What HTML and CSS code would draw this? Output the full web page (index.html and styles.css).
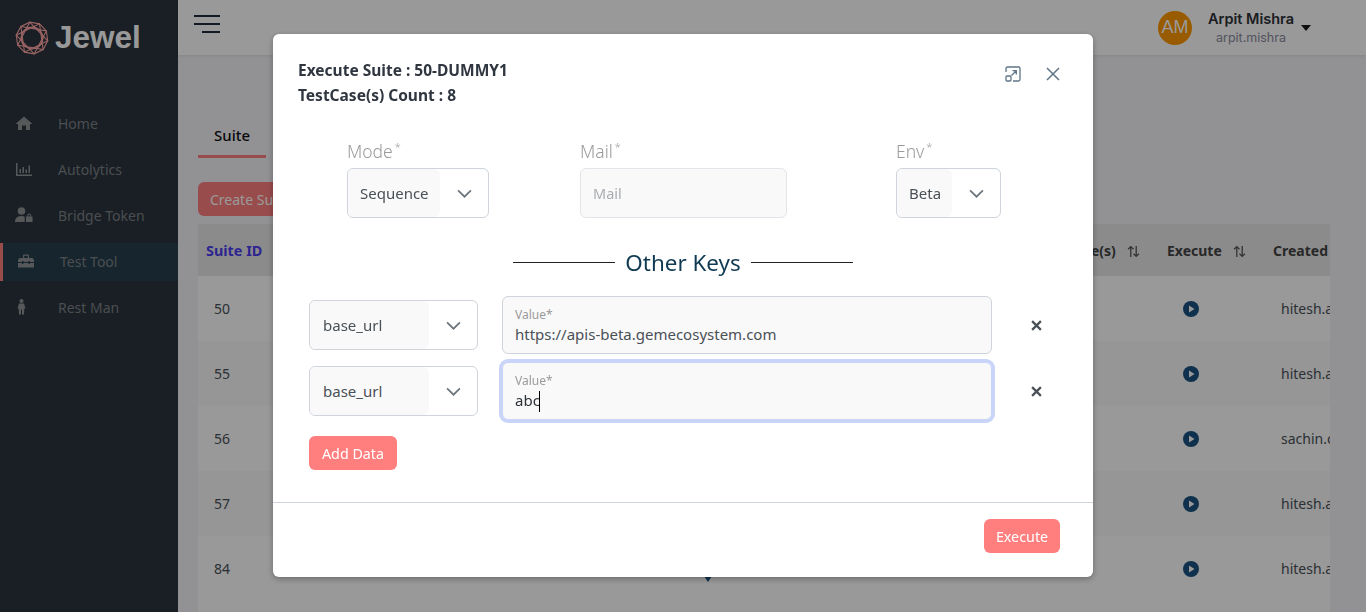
FILE: index.html
```html
<!DOCTYPE html>
<html lang="en">
  <head>
    <meta charset="UTF-8" />
    <meta name="viewport" content="width=device-width, initial-scale=1.0" />
    <title>Jewel - Test Tool</title>
    <link rel="stylesheet" href="styles.css">
  </head>
  <body>
    <div class="shell">
      <aside class="sidebar">
        <div class="logo">
          <svg class="logo-mark" viewBox="0 0 34 34" fill="none" stroke="#ffa5a5" stroke-width="1.1">
            <g transform="rotate(10 17 17)">
              <polygon points="33,17 29.94,26.4 21.94,32.22 12.06,32.22 4.06,26.4 1,17 4.06,7.6 12.06,1.78 21.94,1.78 29.94,7.6" />
              <polygon points="33,17 12.06,32.22 4.06,7.6 29.94,7.6 21.94,32.22 1,17 21.94,1.78 29.94,26.4 4.06,26.4 12.06,1.78" />
              <circle cx="17" cy="17" r="10.8" stroke-width="1.3" />
            </g>
          </svg>
          <span class="logo-text">Jewel</span>
        </div>
        <nav class="nav">
          <a class="nav-item">
            <svg class="nav-icon" viewBox="0 0 16 16"><path d="M8 1.5 16.5 9H14v6h-4v-4.5H6V15H2V9H-.5z" /></svg>
            <span>Home</span>
          </a>
          <a class="nav-item">
            <svg class="nav-icon" viewBox="0 0 16 16"><path d="M0 2h1.5v11.5H16V15H0zM3.5 8H5v4H3.5zM6.5 6H8v6H6.5zM9.5 8.5H11V12H9.5zM12.5 4.5H14V12h-1.5z" /></svg>
            <span>Autolytics</span>
          </a>
          <a class="nav-item">
            <svg class="nav-icon" viewBox="0 0 18 16"><circle cx="6.5" cy="4" r="3.8" /><path d="M0 15c0-4 2.5-6 6.5-6 1.3 0 2.3.2 3.2.6V15zM11 9.5h6.5V15H11zM12.3 9.5V8a2 2 0 0 1 3.9 0v1.500h-1.100V8a.9.9 0 0 0-1.700 0v1.500z" /></svg>
            <span>Bridge Token</span>
          </a>
          <a class="nav-item nav-item-active">
            <svg class="nav-icon" viewBox="0 0 16 16"><path d="M1.5 5h13L16 7v2h-4V8h-1.5v1h-5V8H4v1H0V7zM0 10h4v1h1.500v-1h5v1H12v-1h4v4.500H0zM5 5V2.500q0-1 1-1h4q1 0 1 1V5H9.800V2.800H6.200V5z" /></svg>
            <span>Test Tool</span>
          </a>
          <a class="nav-item">
            <svg class="nav-icon" viewBox="0 0 16 16"><circle cx="5.5" cy="2" r="2" /><path d="M3 4.500h5l1.500 5H8.300L8 15.500H6v-5H5v5H3l-.3-6H1.500z" /></svg>
            <span>Rest Man</span>
          </a>
        </nav>
      </aside>

      <div class="main">
        <header class="topbar">
          <div class="burger"><span></span><span></span><span class="burger-short"></span></div>
          <div class="user">
            <div class="avatar">AM</div>
            <div class="user-text">
              <div class="user-name">Arpit Mishra</div>
              <div class="user-id">arpit.mishra</div>
            </div>
            <div class="user-caret"></div>
          </div>
        </header>

        <section class="content">
          <div class="tabs"><div class="tab">Suite</div></div>
          <button class="create-btn">Create Suite</button>
          <div class="table-wrap">
            <table class="suite-table">
              <colgroup>
                <col class="col-id" /><col class="col-name" /><col class="col-desc" />
                <col class="col-cases" /><col class="col-exec" /><col class="col-by" />
              </colgroup>
              <thead>
                <tr>
                  <th class="th-id">Suite ID</th>
                  <th>Suite Name</th>
                  <th></th>
                  <th>TestCase(s) <svg class="sort" viewBox="0 0 12 12"><path d="M3.5 11V1.5M1 4l2.5-2.5L6 4M8.5 1v9.5M6 8l2.5 2.5L11 8" /></svg></th>
                  <th>Execute <svg class="sort" viewBox="0 0 12 12"><path d="M3.5 11V1.5M1 4l2.5-2.5L6 4M8.5 1v9.5M6 8l2.5 2.5L11 8" /></svg></th>
                  <th>Created By</th>
                </tr>
              </thead>
              <tbody>
                <tr><td>50</td><td></td><td></td><td></td><td class="td-exec"><svg class="play" viewBox="0 0 16 16"><circle cx="8" cy="8" r="8" /><path class="play-tri" d="M6 4.5 11.5 8 6 11.5z" /></svg></td><td>hitesh.agarwal</td></tr>
                <tr><td>55</td><td></td><td></td><td></td><td class="td-exec"><svg class="play" viewBox="0 0 16 16"><circle cx="8" cy="8" r="8" /><path class="play-tri" d="M6 4.5 11.5 8 6 11.5z" /></svg></td><td>hitesh.agarwal</td></tr>
                <tr><td>56</td><td></td><td></td><td></td><td class="td-exec"><svg class="play" viewBox="0 0 16 16"><circle cx="8" cy="8" r="8" /><path class="play-tri" d="M6 4.5 11.5 8 6 11.5z" /></svg></td><td>sachin.chauhan</td></tr>
                <tr><td>57</td><td></td><td></td><td></td><td class="td-exec"><svg class="play" viewBox="0 0 16 16"><circle cx="8" cy="8" r="8" /><path class="play-tri" d="M6 4.5 11.5 8 6 11.5z" /></svg></td><td>hitesh.agarwal</td></tr>
                <tr><td>84</td><td></td><td class="td-marker"><span class="marker"></span></td><td></td><td class="td-exec"><svg class="play" viewBox="0 0 16 16"><circle cx="8" cy="8" r="8" /><path class="play-tri" d="M6 4.5 11.5 8 6 11.5z" /></svg></td><td>hitesh.agarwal</td></tr>
              </tbody>
            </table>
          </div>
        </section>
      </div>
    </div>

    <div class="backdrop">
      <div class="dialog">
        <div class="dialog-head">
          <div class="dialog-title">
            <div>Execute Suite : 50-DUMMY1</div>
            <div>TestCase(s) Count : 8</div>
          </div>
          <div class="dialog-tools">
            <svg class="tool-expand" viewBox="0 0 16 16" fill="none" stroke="#5f7486" stroke-width="1.3">
              <path d="M1 6V2.5A1.5 1.5 0 0 1 2.5 1h11A1.5 1.5 0 0 1 15 2.5v11a1.5 1.5 0 0 1-1.5 1.5H8" />
              <rect x="1" y="10" width="5" height="5" rx="1" />
              <path d="M6.5 9.5 11 5M7.5 4.7H11.3V8.5" />
            </svg>
            <svg class="tool-close" viewBox="0 0 14 14" fill="none" stroke="#5f7486" stroke-width="1.5">
              <path d="M1 1l12 12M13 1 1 13" />
            </svg>
          </div>
        </div>

        <div class="fields">
          <div>
            <div class="field-label">Mode<sup>*</sup></div>
            <div class="select select-mode">
              <div class="select-value">Sequence</div>
              <div class="select-arrow"><svg viewBox="0 0 14 8"><path d="M1 1l6 6 6-6" /></svg></div>
            </div>
          </div>
          <div>
            <div class="field-label">Mail<sup>*</sup></div>
            <div class="mail-input">Mail</div>
          </div>
          <div>
            <div class="field-label">Env<sup>*</sup></div>
            <div class="select select-env">
              <div class="select-value">Beta</div>
              <div class="select-arrow"><svg viewBox="0 0 14 8"><path d="M1 1l6 6 6-6" /></svg></div>
            </div>
          </div>
        </div>

        <div class="divider-title"><span>Other Keys</span></div>

        <div class="key-rows">
          <div class="key-row">
            <div class="select select-key">
              <div class="select-value">base_url</div>
              <div class="select-arrow"><svg viewBox="0 0 14 8"><path d="M1 1l6 6 6-6" /></svg></div>
            </div>
            <div class="value-input">
              <div class="value-label">Value*</div>
              <div class="value-text">https://apis-beta.gemecosystem.com</div>
            </div>
            <svg class="key-remove" viewBox="0 0 10 10"><path d="M1 1l8 8M9 1 1 9" /></svg>
          </div>
          <div class="key-row">
            <div class="select select-key">
              <div class="select-value">base_url</div>
              <div class="select-arrow"><svg viewBox="0 0 14 8"><path d="M1 1l6 6 6-6" /></svg></div>
            </div>
            <div class="value-input value-input-focus">
              <div class="value-label">Value*</div>
              <div class="value-text value-text-dark">abc<span class="text-caret"></span></div>
            </div>
            <svg class="key-remove" viewBox="0 0 10 10"><path d="M1 1l8 8M9 1 1 9" /></svg>
          </div>
        </div>

        <button class="btn btn-add">Add Data</button>

        <div class="dialog-foot">
          <button class="btn btn-execute">Execute</button>
        </div>
      </div>
    </div>
  </body>
</html>
```

FILE: styles.css
```css
* {
  box-sizing: border-box;
}

html,
body {
  height: 100%;
}

body {
  margin: 0;
  overflow: hidden;
  font-family: "Noto Sans", sans-serif;
  font-size: 14px;
  color: #495057;
  background: #f3f3f8;
}

.shell {
  display: flex;
  height: 100vh;
}

/* sidebar */
.sidebar {
  flex: 0 0 178px;
  background: #2a343c;
}

.logo {
  display: flex;
  align-items: center;
  gap: 6px;
  height: 75px;
  padding-left: 15px;
}

.logo-mark {
  width: 34px;
  height: 34px;
}

.logo-text {
  font-family: "Liberation Sans", sans-serif;
  font-size: 31.5px;
  font-weight: 700;
  color: #fff;
}

.nav {
  display: flex;
  flex-direction: column;
  gap: 8px;
  padding-top: 30px;
}

.nav-item {
  display: flex;
  align-items: center;
  height: 38px;
  padding-left: 15px;
  color: #7e8387;
}

.nav-item span {
  margin: 0 0 2px 25px;
}

.nav-icon {
  flex: 0 0 18px;
  width: 18px;
  height: 16px;
  margin-bottom: 2px;
  fill: #8f9396;
}

.nav-item-active {
  border-left: 3px solid #ff7f7f;
  padding-left: 14px;
  background: #253e4d;
}

/* top bar */
.main {
  flex: 1;
  display: flex;
  flex-direction: column;
  min-width: 0;
}

.topbar {
  display: flex;
  flex: 0 0 55px;
  justify-content: space-between;
  align-items: center;
  padding: 0 55px 0 16px;
  background: #fff;
  box-shadow: 0 1px 3px rgba(0, 0, 0, 0.08);
}

.burger {
  display: flex;
  flex-direction: column;
  align-items: flex-end;
  gap: 6px;
  width: 26px;
  margin-bottom: 7px;
}

.burger span {
  width: 100%;
  height: 2px;
  background: #1f2d3d;
}

.burger .burger-short {
  width: 18px;
}

.user {
  display: flex;
  align-items: center;
}

.avatar {
  display: flex;
  justify-content: center;
  align-items: center;
  width: 34px;
  height: 34px;
  border-radius: 50%;
  font-family: "Liberation Sans", sans-serif;
  font-size: 18px;
  color: #fff;
  background: #ff9800;
}

.user-text {
  margin-left: 16px;
  text-align: center;
}

.user-name {
  font-family: Inter, sans-serif;
  font-size: 14.5px;
  font-weight: 600;
  line-height: 19px;
  color: #2d3138;
}

.user-id {
  font-family: Inter, sans-serif;
  font-size: 12.5px;
  line-height: 19px;
  color: #8a8a9c;
}

.user-caret {
  width: 0;
  height: 0;
  margin-left: 7px;
  border: 5.5px solid transparent;
  border-top: 6px solid #1a1a1a;
  border-bottom: 0;
}

/* suite page behind the dialog */
.content {
  display: flex;
  flex: 1;
  flex-direction: column;
  min-height: 0;
  padding: 63px 36px 0 20px;
}

.tabs {
  display: flex;
  flex: 0 0 40px;
}

.tab {
  width: 68px;
  padding: 7px 0 0 16px;
  border-bottom: 3px solid #ff7f7f;
  font-size: 15px;
  font-weight: 500;
  color: #111;
}

.create-btn {
  display: block;
  flex: 0 0 34px;
  width: 130px;
  margin-top: 24px;
  padding: 0 12px;
  border: 0;
  border-radius: 6px;
  font: inherit;
  text-align: left;
  color: #fff;
  background: #ff7f7f;
}

.table-wrap {
  flex: 1;
  min-height: 0;
  margin-top: 8px;
  overflow: hidden;
  background: #fff;
}

.suite-table {
  width: 100%;
  border-collapse: collapse;
  table-layout: fixed;
}

.col-id {
  width: 132px;
}

.col-name {
  width: 350px;
}

.col-desc {
  width: 350px;
}

.col-cases {
  width: 129px;
}

.col-exec {
  width: 106px;
}

.suite-table th {
  height: 52px;
  padding: 0 8px;
  font-weight: 700;
  text-align: left;
  white-space: nowrap;
  color: #444;
  background: #e8e8ea;
}

.suite-table .th-id {
  font-size: 14.4px;
  color: #4b3df0;
}

.suite-table td {
  height: 65px;
  padding: 0 16px;
  white-space: nowrap;
  background: #fff;
}

.suite-table tr:nth-child(even) td {
  background: #fafafa;
}

.suite-table .td-exec {
  padding-left: 24px;
}

.sort {
  width: 13px;
  height: 13px;
  margin-left: 8px;
  vertical-align: -2px;
  fill: none;
  stroke: #555;
  stroke-width: 1.2;
}

.play {
  display: block;
  width: 16px;
  height: 16px;
  fill: #1a5280;
}

.play .play-tri {
  fill: #fff;
}

.suite-table .td-marker {
  vertical-align: top;
}

.marker {
  display: block;
  width: 0;
  height: 0;
  margin: 40px 0 0 8px;
  border: 4px solid transparent;
  border-top: 6px solid #1a5280;
  border-bottom: 0;
}

/* dialog */
.backdrop {
  position: fixed;
  inset: 0;
  display: flex;
  justify-content: center;
  align-items: flex-start;
  padding-top: 34px;
  background: rgba(0, 0, 0, 0.4);
}

.dialog {
  width: 820px;
  height: 543px;
  border-radius: 6px;
  background: #fff;
  box-shadow: 0 2px 6px rgba(0, 0, 0, 0.3);
}

.dialog-head {
  display: flex;
  justify-content: space-between;
  padding: 24px 33px 0 25px;
}

.dialog-title {
  font-size: 15.5px;
  font-weight: 700;
  line-height: 25px;
  color: #2f3640;
}

.dialog-tools {
  display: flex;
  align-items: flex-start;
  gap: 25px;
  padding-top: 8px;
}

.tool-expand {
  width: 16px;
  height: 16px;
}

.tool-close {
  width: 14px;
  height: 14px;
  margin-top: 1px;
}

.fields {
  display: grid;
  grid-template-columns: 233px 316px 105px;
  margin-top: 36px;
  padding-left: 74px;
}

.field-label {
  height: 24px;
  margin-top: -4px;
  padding-bottom: 4px;
  font-size: 17.5px;
  font-weight: 300;
  line-height: 22px;
  color: #9a9a9a;
  box-sizing: content-box;
}

.field-label sup {
  margin-left: 2px;
  font-size: 11px;
  line-height: 0;
}

.select {
  display: flex;
  height: 50px;
  border: 1px solid #ced4da;
  border-radius: 6px;
  background: #fff;
}

.select-value {
  display: flex;
  align-items: center;
  padding-left: 12px;
  border-radius: 6px;
  font-size: 15px;
  color: #495057;
  background: #f9f9f9;
}

.select-arrow {
  display: flex;
  flex: 1;
  justify-content: center;
  align-items: center;
}

.select-arrow svg {
  width: 15px;
  height: 9px;
  fill: none;
  stroke: #6c757d;
  stroke-width: 1.6;
}

.select-mode {
  width: 142px;
}

.select-mode .select-value {
  width: 92px;
}

.select-env {
  width: 105px;
}

.select-env .select-value {
  width: 55px;
}

.select-key {
  flex: 0 0 169px;
}

.select-key .select-value {
  width: 119px;
  padding-left: 13px;
}

.mail-input {
  display: flex;
  align-items: center;
  width: 207px;
  height: 50px;
  padding-left: 12px;
  border: 1px solid #e2e5e9;
  border-radius: 6px;
  font-size: 14.5px;
  color: #a9adb2;
  background: #f9f9f9;
}

.divider-title {
  display: flex;
  justify-content: center;
  align-items: center;
  gap: 10px;
  height: 30px;
  margin-top: 29px;
  font-size: 22.4px;
  color: #0f3a52;
}

.divider-title::before,
.divider-title::after {
  content: "";
  width: 102px;
  height: 1px;
  background: #222;
}

.key-rows {
  display: flex;
  flex-direction: column;
  gap: 8px;
  margin-top: 19px;
  padding-left: 36px;
}

.key-row {
  display: flex;
  align-items: center;
}

.value-input {
  width: 490px;
  height: 58px;
  margin-left: 24px;
  padding: 9px 12px 0;
  border: 1px solid #ced4da;
  border-radius: 6px;
  background: #f9f9f9;
}

.value-input-focus {
  border-color: #c9d4f9;
  box-shadow: 0 0 0 3px #c9d4f9;
}

.value-label {
  font-size: 12px;
  line-height: 17px;
  color: #9a9a9a;
}

.value-text {
  margin-top: 1px;
  font-size: 15px;
  line-height: 20px;
  color: #495057;
}

.value-text-dark {
  color: #2c3138;
}

.text-caret {
  display: inline-block;
  width: 1px;
  height: 21px;
  margin-left: -1px;
  vertical-align: -6px;
  background: #000;
}

.key-remove {
  width: 11px;
  height: 11px;
  margin-left: 39px;
  fill: none;
  stroke: #495057;
  stroke-width: 2;
}

.btn {
  display: block;
  height: 34px;
  padding: 0 12px;
  border: 0;
  border-radius: 6px;
  font: inherit;
  font-size: 14.3px;
  color: #fff;
  background: #ff7f7f;
}

.btn-add {
  width: 88px;
  margin: 16px 0 0 36px;
}

.btn-execute {
  width: 76px;
  padding: 0;
}

.dialog-foot {
  display: flex;
  justify-content: flex-end;
  margin-top: 32px;
  padding: 16px 33px 24px;
  border-top: 1px solid #ced4da;
}
```
